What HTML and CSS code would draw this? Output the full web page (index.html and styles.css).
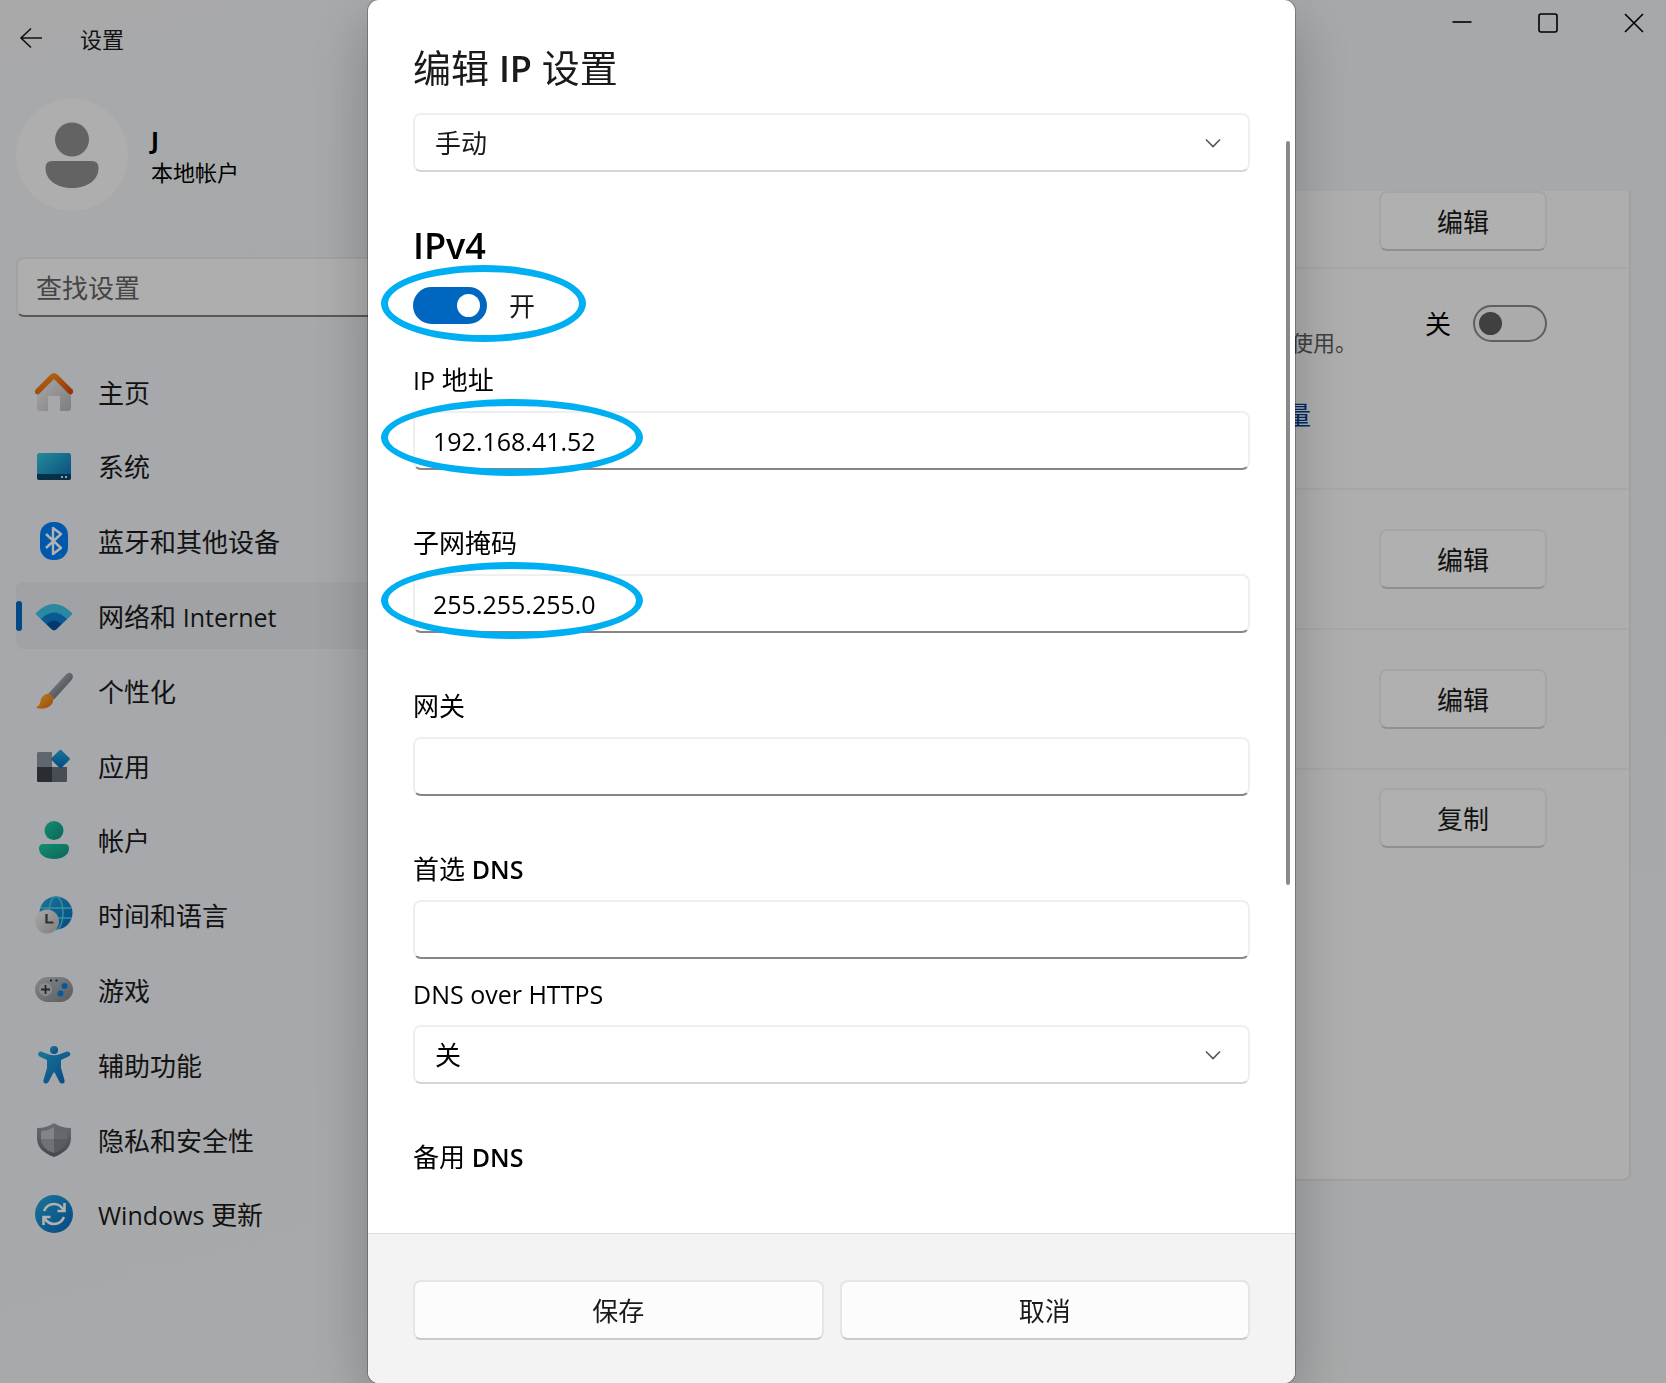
FILE: index.html
```html
<!DOCTYPE html>
<html lang="zh-CN">
<head>
    <meta charset="UTF-8">
    <meta name="viewport" content="width=device-width, initial-scale=1.0">
    <title>设置</title>
    <link rel="stylesheet" href="styles.css">
</head>
<body>
    <div class="window">
        <header class="titlebar">
            <button class="back" aria-label="返回">
                <svg width="24" height="22" viewBox="0 0 24 22"><path d="M23 11H2M12 1.500L2 11l10 9.500" fill="none" stroke="#1a1a1a" stroke-width="1.600"/></svg>
            </button>
            <span class="app-name">设置</span>
            <div class="window-buttons">
                <button aria-label="最小化"><svg width="20" height="20" viewBox="0 0 20 20"><path d="M.5 9h19" stroke="#000" stroke-width="1.600"/></svg></button>
                <button aria-label="最大化"><svg width="20" height="20" viewBox="0 0 20 20"><rect x="1" y="1" width="18" height="18" rx="2" fill="none" stroke="#000" stroke-width="1.600"/></svg></button>
                <button aria-label="关闭"><svg width="20" height="20" viewBox="0 0 20 20"><path d="M1 1l18 18M19 1L1 19" stroke="#000" stroke-width="1.600"/></svg></button>
            </div>
        </header>

        <div class="columns">
            <aside class="sidebar">
                <div class="profile">
                    <div class="avatar">
                        <svg width="54" height="66" viewBox="0 0 54 66" fill="#8e8e8e"><circle cx="27" cy="17.500" r="17"/><path d="M7 39h40q6.500 0 6.500 7C53.500 59 41 66 27 66S.5 59 .5 46q0-7 6.500-7z"/></svg>
                    </div>
                    <div>
                        <div class="user-name">J</div>
                        <div class="user-type">本地帐户</div>
                    </div>
                </div>
                <input class="search" type="text" placeholder="查找设置" aria-label="查找设置">

                <nav class="menu">
                    <a href="#">
                        <svg width="38" height="38" viewBox="0 0 38 38"><path d="M2 18L19 3l17 15v17q0 3-3 3h-8V24q0-1-1-1H14q-1 0-1 1v14H5q-3 0-3-3z" fill="url(#gHouse)"/><path d="M2.500 18.500L17 4q2-2 4 0l14.500 14.500" fill="none" stroke="url(#gRoof)" stroke-width="5.500" stroke-linecap="round"/></svg>
                        主页
                    </a>
                    <a href="#">
                        <svg width="38" height="38" viewBox="0 0 38 38"><rect x="2" y="6" width="34" height="27" rx="2.500" fill="url(#gScreen)"/><path d="M2 27h34v3.500q0 2.500-2.500 2.500h-29Q2 33 2 30.500z" fill="#0b4566"/><path d="M26 29h2v2h-2zM30 29h2v2h-2z" fill="#cfe6f0"/></svg>
                        系统
                    </a>
                    <a href="#">
                        <svg width="38" height="38" viewBox="0 0 38 38"><rect x="5" y="0" width="28" height="38" rx="13" fill="#007ff5"/><path d="M11 12l15 14-8 6V6l8 6-15 14" fill="none" stroke="#fff" stroke-width="2.400" stroke-linejoin="round"/></svg>
                        蓝牙和其他设备
                    </a>
                    <a href="#" class="active">
                        <svg width="38" height="38" viewBox="0 0 38 38"><path d="M1 16Q19-2 37 16q.5 1-.5 2L21 32.500q-2 1.500-4 0L1.500 18Q.5 17 1 16z" fill="#3dc3e6"/><path d="M6 22Q19 9 32 22L21 32.500q-2 1.500-4 0z" fill="#0f80d0"/><path d="M11.500 27Q19 20 26.500 27L21 32.500q-2 1.500-4 0z" fill="#0a4f9c"/></svg>
                        <span>网络和 <span class="latin">Internet</span></span>
                    </a>
                    <a href="#">
                        <svg width="38" height="38" viewBox="0 0 38 38"><path d="M12 23L31 2.500q3-3 5.500-1t.5 6L19 27.500z" fill="url(#gHandle)"/><path d="M11 22q5-1 7 3.500C19.500 32 14 36 8 36.500q-5 .5-7-1 4-2 4.500-6.500T11 22z" fill="url(#gBrush)"/></svg>
                        个性化
                    </a>
                    <a href="#">
                        <svg width="38" height="38" viewBox="0 0 38 38"><path d="M3.500 5H17v15H2V6.500Q2 5 3.500 5z" fill="#8b919d"/><path d="M2 20h15v15H3.500Q2 35 2 33.500z" fill="#3c4148"/><path d="M17 20h15v13.500q0 1.500-1.500 1.500H17z" fill="#686f78"/><rect x="18.500" y="5" width="14" height="14" rx="1.500" transform="rotate(45 25.500 12)" fill="url(#gBlue)"/></svg>
                        应用
                    </a>
                    <a href="#">
                        <svg width="38" height="38" viewBox="0 0 38 38" fill="url(#gGreen)"><circle cx="19" cy="9.500" r="9.500"/><path d="M8 23h22q4 0 4 4.500C34 34 27 38 19 38S4 34 4 27.500Q4 23 8 23z"/></svg>
                        帐户
                    </a>
                    <a href="#">
                        <svg width="38" height="38" viewBox="0 0 38 38"><circle cx="21" cy="17" r="16.500" fill="url(#gBlue)"/><g fill="none" stroke="#52cfe8" stroke-width="1.400"><ellipse cx="21" cy="17" rx="7" ry="16.500"/><path d="M6 12h30M5 22h32"/></g><circle cx="12" cy="25.500" r="12" fill="url(#gHouse)"/><path d="M11.500 18v8.500h7" fill="none" stroke="#444" stroke-width="2.200"/></svg>
                        时间和语言
                    </a>
                    <a href="#">
                        <svg width="38" height="38" viewBox="0 0 38 38"><rect x="0" y="6" width="38" height="25" rx="12.500" fill="url(#gPad)"/><circle cx="10.500" cy="18.500" r="6.500" fill="#c5c8ca"/><path d="M6 18.500h9M10.500 14v9" stroke="#383838" stroke-width="1.800"/><circle cx="29.500" cy="15" r="3" fill="#0a7fe0"/><circle cx="25.500" cy="22.500" r="3" fill="#0a7fe0"/><path d="M15 8.500h2v2h-2zM20.500 8.500h2v2h-2z" fill="#333"/></svg>
                        游戏
                    </a>
                    <a href="#">
                        <svg width="38" height="38" viewBox="0 0 38 38" fill="url(#gBlue)"><circle cx="19" cy="4" r="4"/><path d="M6 5.500l8 3q5 1.500 10 0l8-3q2-.5 3 1.500t-1.500 3.500L26 14v8l3.500 12q.5 3-1.500 3.500t-3.500-1.500L19.800 27q-.8-1.500-1.600 0L13.500 36q-1.500 2-3.500 1.500T8.500 34L12 22v-8l-7.500-3.500Q2.500 9 3.300 7T6 5.500z"/></svg>
                        辅助功能
                    </a>
                    <a href="#">
                        <svg width="38" height="38" viewBox="0 0 38 38"><path d="M19 2q7 5 17 5v10c0 9-6 15-17 19C8 32 2 26 2 17V7q10 0 17-5z" fill="url(#gShield)"/><path d="M19 6v26C10 29 6 24 6 17v-7q8-.5 13-4z" fill="#b9bec4"/><path d="M19 6v26c9-3 13-8 13-15v-7q-8-.5-13-4z" fill="#9096a0"/><path d="M6 18h26c-.5 7-5 11.500-13 14C11 29.500 6.500 25 6 18z" fill="#555" fill-opacity=".25"/></svg>
                        隐私和安全性
                    </a>
                    <a href="#">
                        <svg width="38" height="38" viewBox="0 0 38 38"><circle cx="19" cy="19" r="19" fill="url(#gBlue)"/><g fill="none" stroke="#fff" stroke-width="2.600"><path d="M9 16q3-7 10-7 6 0 9.500 6M29 22q-3 7-10 7-6 0-9.500-6"/><path d="M29.500 8v8h-7M8.500 30v-8h7"/></g></svg>
                        <span><span class="latin">Windows</span> 更新</span>
                    </a>
                </nav>
            </aside>

            <main class="panel">
                <div class="row row-first">
                    <button class="btn">编辑</button>
                </div>
                <div class="row row-metered">
                    <div class="row-text">
                        <p class="hint">使用。</p>
                        <a class="link" href="#">量</a>
                    </div>
                    <label class="switch-line">关 <input type="checkbox" class="switch"></label>
                </div>
                <div class="row">
                    <button class="btn">编辑</button>
                </div>
                <div class="row">
                    <button class="btn">编辑</button>
                </div>
                <div class="row row-last">
                    <button class="btn">复制</button>
                </div>
            </main>
        </div>
    </div>

    <div class="overlay">
        <form class="dialog" role="dialog" aria-labelledby="dialogTitle">
            <h1 id="dialogTitle">编辑 <span class="semi">IP</span> 设置</h1>
            <div class="dialog-body">
                <div class="select-box">
                    <select aria-label="IP 设置"><option>手动</option></select>
                    <svg width="16" height="10" viewBox="0 0 16 10"><path d="M1 1.500l7 7 7-7" fill="none" stroke="#555" stroke-width="1.600"/></svg>
                </div>

                <h2>IPv4</h2>
                <div class="toggle-row">
                    <input type="checkbox" class="switch" id="ipv4" checked>
                    <label for="ipv4">开</label>
                    <span class="mark mark-toggle"></span>
                </div>

                <div class="field field-first">
                    <label for="ip"><span class="latin">IP</span> 地址</label>
                    <div class="input-box">
                        <input type="text" id="ip" value="192.168.41.52">
                        <span class="mark mark-field"></span>
                    </div>
                </div>
                <div class="field">
                    <label for="mask">子网掩码</label>
                    <div class="input-box">
                        <input type="text" id="mask" value="255.255.255.0">
                        <span class="mark mark-field"></span>
                    </div>
                </div>
                <div class="field">
                    <label for="gateway">网关</label>
                    <div class="input-box"><input type="text" id="gateway"></div>
                </div>
                <div class="field">
                    <label for="dns">首选 <span class="latin semi">DNS</span></label>
                    <div class="input-box"><input type="text" id="dns"></div>
                </div>
                <div class="field field-close">
                    <label for="doh"><span class="latin">DNS over HTTPS</span></label>
                    <div class="select-box">
                        <select id="doh"><option>关</option></select>
                        <svg width="16" height="10" viewBox="0 0 16 10"><path d="M1 1.500l7 7 7-7" fill="none" stroke="#555" stroke-width="1.600"/></svg>
                    </div>
                </div>
                <div class="field">
                    <span>备用 <span class="latin semi">DNS</span></span>
                </div>
            </div>
            <span class="scroll-thumb"></span>
            <footer class="dialog-footer">
                <button type="button" class="btn">保存</button>
                <button type="button" class="btn">取消</button>
            </footer>
        </form>
    </div>

    <!-- gradients shared by the menu icons -->
    <svg class="defs" width="0" height="0">
        <defs>
            <linearGradient id="gHouse" x1="0" y1="0" x2="1" y2="1"><stop offset="0" stop-color="#f4f4f4"/><stop offset="1" stop-color="#b4b4b4"/></linearGradient>
            <linearGradient id="gRoof" x1="0" y1="0" x2="1" y2="1"><stop offset="0" stop-color="#ff9a1a"/><stop offset="1" stop-color="#d94a0c"/></linearGradient>
            <linearGradient id="gScreen" x1="0" y1="0" x2="1" y2="1"><stop offset="0" stop-color="#35c8d8"/><stop offset="1" stop-color="#0c6cb8"/></linearGradient>
            <linearGradient id="gHandle" x1="0" y1="0" x2="1" y2="1"><stop offset="0.300" stop-color="#a9afb6"/><stop offset="0.800" stop-color="#656b73"/></linearGradient>
            <linearGradient id="gBrush" x1="0" y1="0" x2="1" y2="1"><stop offset="0" stop-color="#ffc02a"/><stop offset="1" stop-color="#e8641a"/></linearGradient>
            <linearGradient id="gBlue" x1="0" y1="0" x2="1" y2="1"><stop offset="0" stop-color="#26a9d8"/><stop offset="1" stop-color="#0868be"/></linearGradient>
            <linearGradient id="gGreen" x1="0" y1="0" x2="1" y2="1"><stop offset="0" stop-color="#1fcaa2"/><stop offset="1" stop-color="#10937f"/></linearGradient>
            <linearGradient id="gPad" x1="0" y1="0" x2="1" y2="1"><stop offset="0" stop-color="#c0c5c8"/><stop offset="1" stop-color="#7d8488"/></linearGradient>
            <linearGradient id="gShield" x1="0" y1="0" x2="0" y2="1"><stop offset="0" stop-color="#989ea6"/><stop offset="1" stop-color="#60666d"/></linearGradient>
        </defs>
    </svg>
</body>
</html>
```
FILE: styles.css
```css
* {
    box-sizing: border-box;
}
body {
    margin: 0;
    font-family: "Open Sans", "Noto Sans CJK SC", sans-serif;
    font-size: 26px;
    line-height: 36px;
    color: #1a1a1a;
    background: linear-gradient(165deg, #f2f3f4 0%, #eef1f5 25%, #eef1f5 60%, #f1f3f4 100%);
}
button, input, select {
    font: inherit;
    color: inherit;
}
button {
    padding: 0;
    border: none;
    background: none;
}
h1, h2, p {
    margin: 0;
}
.latin {
    font-size: 25px;
    line-height: 1;
}
.semi {
    font-weight: 600;
}
.defs {
    position: absolute;
}

/* settings window */
.window {
    min-height: 100vh;
}
.titlebar {
    display: flex;
    align-items: flex-start;
    height: 99px;
    padding: 13px 22px 0 19px;
}
.back {
    display: flex;
    margin-top: 14px;
}
.app-name {
    margin: 8px 0 0 37px;
    font-size: 22px;
}
.window-buttons {
    display: flex;
    gap: 66px;
    margin-left: auto;
}
.window-buttons button {
    display: flex;
}
.columns {
    display: flex;
    align-items: flex-start;
    gap: 32px;
    padding: 0 35px 0 16px;
}
.sidebar {
    width: 30%;
}
.profile {
    display: flex;
    align-items: center;
    gap: 23px;
}
.avatar {
    display: flex;
    align-items: center;
    justify-content: center;
    width: 112px;
    height: 112px;
    border-radius: 50%;
    background: #f9f9f9;
}
.user-name {
    padding-top: 3px;
    font-size: 24px;
    font-weight: 700;
    line-height: 30px;
    color: #000;
}
.user-type {
    font-size: 22px;
    line-height: 34px;
    color: #000;
}
.search {
    display: block;
    width: 100%;
    height: 60px;
    margin: 46px 0 41px;
    padding: 2px 18px 0;
    border: 2px solid #e6e8ea;
    border-bottom-color: #7d8082;
    border-radius: 8px;
    background: #fafafb;
}
.search::placeholder {
    color: #636363;
}
.menu {
    display: flex;
    flex-direction: column;
    justify-content: space-between;
    height: 890px;
}
.menu a {
    position: relative;
    display: flex;
    align-items: center;
    gap: 25px;
    height: 67px;
    padding: 2px 0 0 19px;
    border-radius: 7px;
    color: inherit;
    text-decoration: none;
}
.menu a svg {
    margin-bottom: 2px;
}
.menu a.active {
    background: #e5e8ec;
}
.menu a.active::before {
    content: "";
    position: absolute;
    left: 0;
    top: 19px;
    width: 6px;
    height: 30px;
    border-radius: 3px;
    background: #0067c0;
}
.panel {
    flex: 1;
    margin-top: 92px;
    border: 2px solid #e3e5e8;
    border-top: none;
    border-radius: 0 0 8px 8px;
    background: #fafafb;
}
.row {
    display: flex;
    align-items: center;
    justify-content: flex-end;
    height: 140px;
    padding-right: 82px;
    border-bottom: 2px solid #eef0f2;
}
.row-first {
    align-items: flex-start;
    height: 78px;
}
.row-metered {
    align-items: flex-start;
    height: 221px;
    padding-top: 36px;
}
.row-last {
    align-items: flex-start;
    height: 409px;
    padding-top: 18px;
    border-bottom: none;
}
.row-text {
    width: 72px;
    margin-right: 68px;
    padding-top: 19px;
}
.hint {
    font-size: 22px;
    text-align: right;
    color: #5c5c5c;
}
.link {
    display: block;
    margin-top: 37px;
    color: #003e92;
    text-decoration: none;
}
.btn {
    width: 168px;
    height: 60px;
    padding-top: 2px;
    border: 2px solid #ececec;
    border-bottom-color: #cfcfcf;
    border-radius: 8px;
    background: #fcfcfc;
}
.switch-line {
    display: flex;
    align-items: center;
    gap: 22px;
    height: 37px;
    color: #000;
}
.switch {
    appearance: none;
    position: relative;
    width: 74px;
    height: 37px;
    margin: 0;
    border: 2px solid #888;
    border-radius: 19px;
    background: #f5f5f5;
}
.switch::before {
    content: "";
    position: absolute;
    left: 4px;
    top: 5px;
    width: 23px;
    height: 23px;
    border-radius: 50%;
    background: #5c5c5c;
}
.switch:checked {
    border-color: #0067c0;
    background: #0067c0;
}
.switch:checked::before {
    left: 42px;
    background: white;
}

/* dialog */
.overlay {
    position: fixed;
    inset: 0;
    display: flex;
    justify-content: center;
    padding-right: 3px;
    background: rgba(0, 0, 0, 0.3);
}
.dialog {
    position: relative;
    display: flex;
    flex-direction: column;
    width: 927px;
    height: 100vh;
    border-radius: 11px;
    overflow: hidden;
    background: white;
    box-shadow: 0 0 0 1px rgba(0, 0, 0, 0.25), 0 20px 60px rgba(0, 0, 0, 0.25);
}
.dialog h1 {
    padding: 41px 45px 20px;
    font-size: 38px;
    line-height: 52px;
    font-weight: 400;
}
.dialog h1 .semi {
    font-size: 36px;
    font-weight: 600;
    line-height: 1;
}
.dialog-body {
    flex: 1;
    min-height: 0;
    padding: 0 45px;
}
.dialog h2 {
    margin-top: 50px;
    font-size: 36px;
    line-height: 48px;
    font-weight: 600;
    color: #000;
}
.select-box,
.input-box {
    position: relative;
}
.select-box select,
.input-box input {
    display: block;
    width: 100%;
    height: 59px;
    padding: 0 20px;
    border: 2px solid #efefef;
    border-radius: 8px;
    background: white;
}
.select-box select {
    appearance: none;
    border-bottom-color: #d6d6d6;
}
.input-box input {
    padding: 0 18px;
    font-size: 25px;
    border-bottom-color: #868686;
}
.select-box svg {
    position: absolute;
    right: 29px;
    top: 25px;
    pointer-events: none;
}
.toggle-row {
    position: relative;
    display: flex;
    align-items: center;
    gap: 22px;
    height: 37px;
    margin-top: 17px;
}
.field {
    margin-top: 55px;
    color: #000;
}
.field > label {
    display: block;
    margin-bottom: 13px;
}
.field-first {
    margin-top: 38px;
}
.field-close {
    margin-top: 17px;
}
/* highlight rings */
.mark {
    position: absolute;
    left: -32px;
    height: 77px;
    border: 7px solid #00aff2;
    border-radius: 50%;
    pointer-events: none;
}
.mark-toggle {
    top: -22px;
    width: 205px;
}
.mark-field {
    top: -12px;
    width: 262px;
}
.scroll-thumb {
    position: absolute;
    right: 5px;
    top: 141px;
    width: 4px;
    height: 744px;
    border-radius: 2px;
    background: #8a8a8a;
}
.dialog-footer {
    display: flex;
    gap: 16px;
    padding: 46px 45px 43px;
    border-top: 1px solid #dedede;
    background: #f3f3f3;
}
.dialog-footer .btn {
    flex: 1;
    border-color: #e5e5e5;
    border-bottom-color: #cacaca;
}
```
